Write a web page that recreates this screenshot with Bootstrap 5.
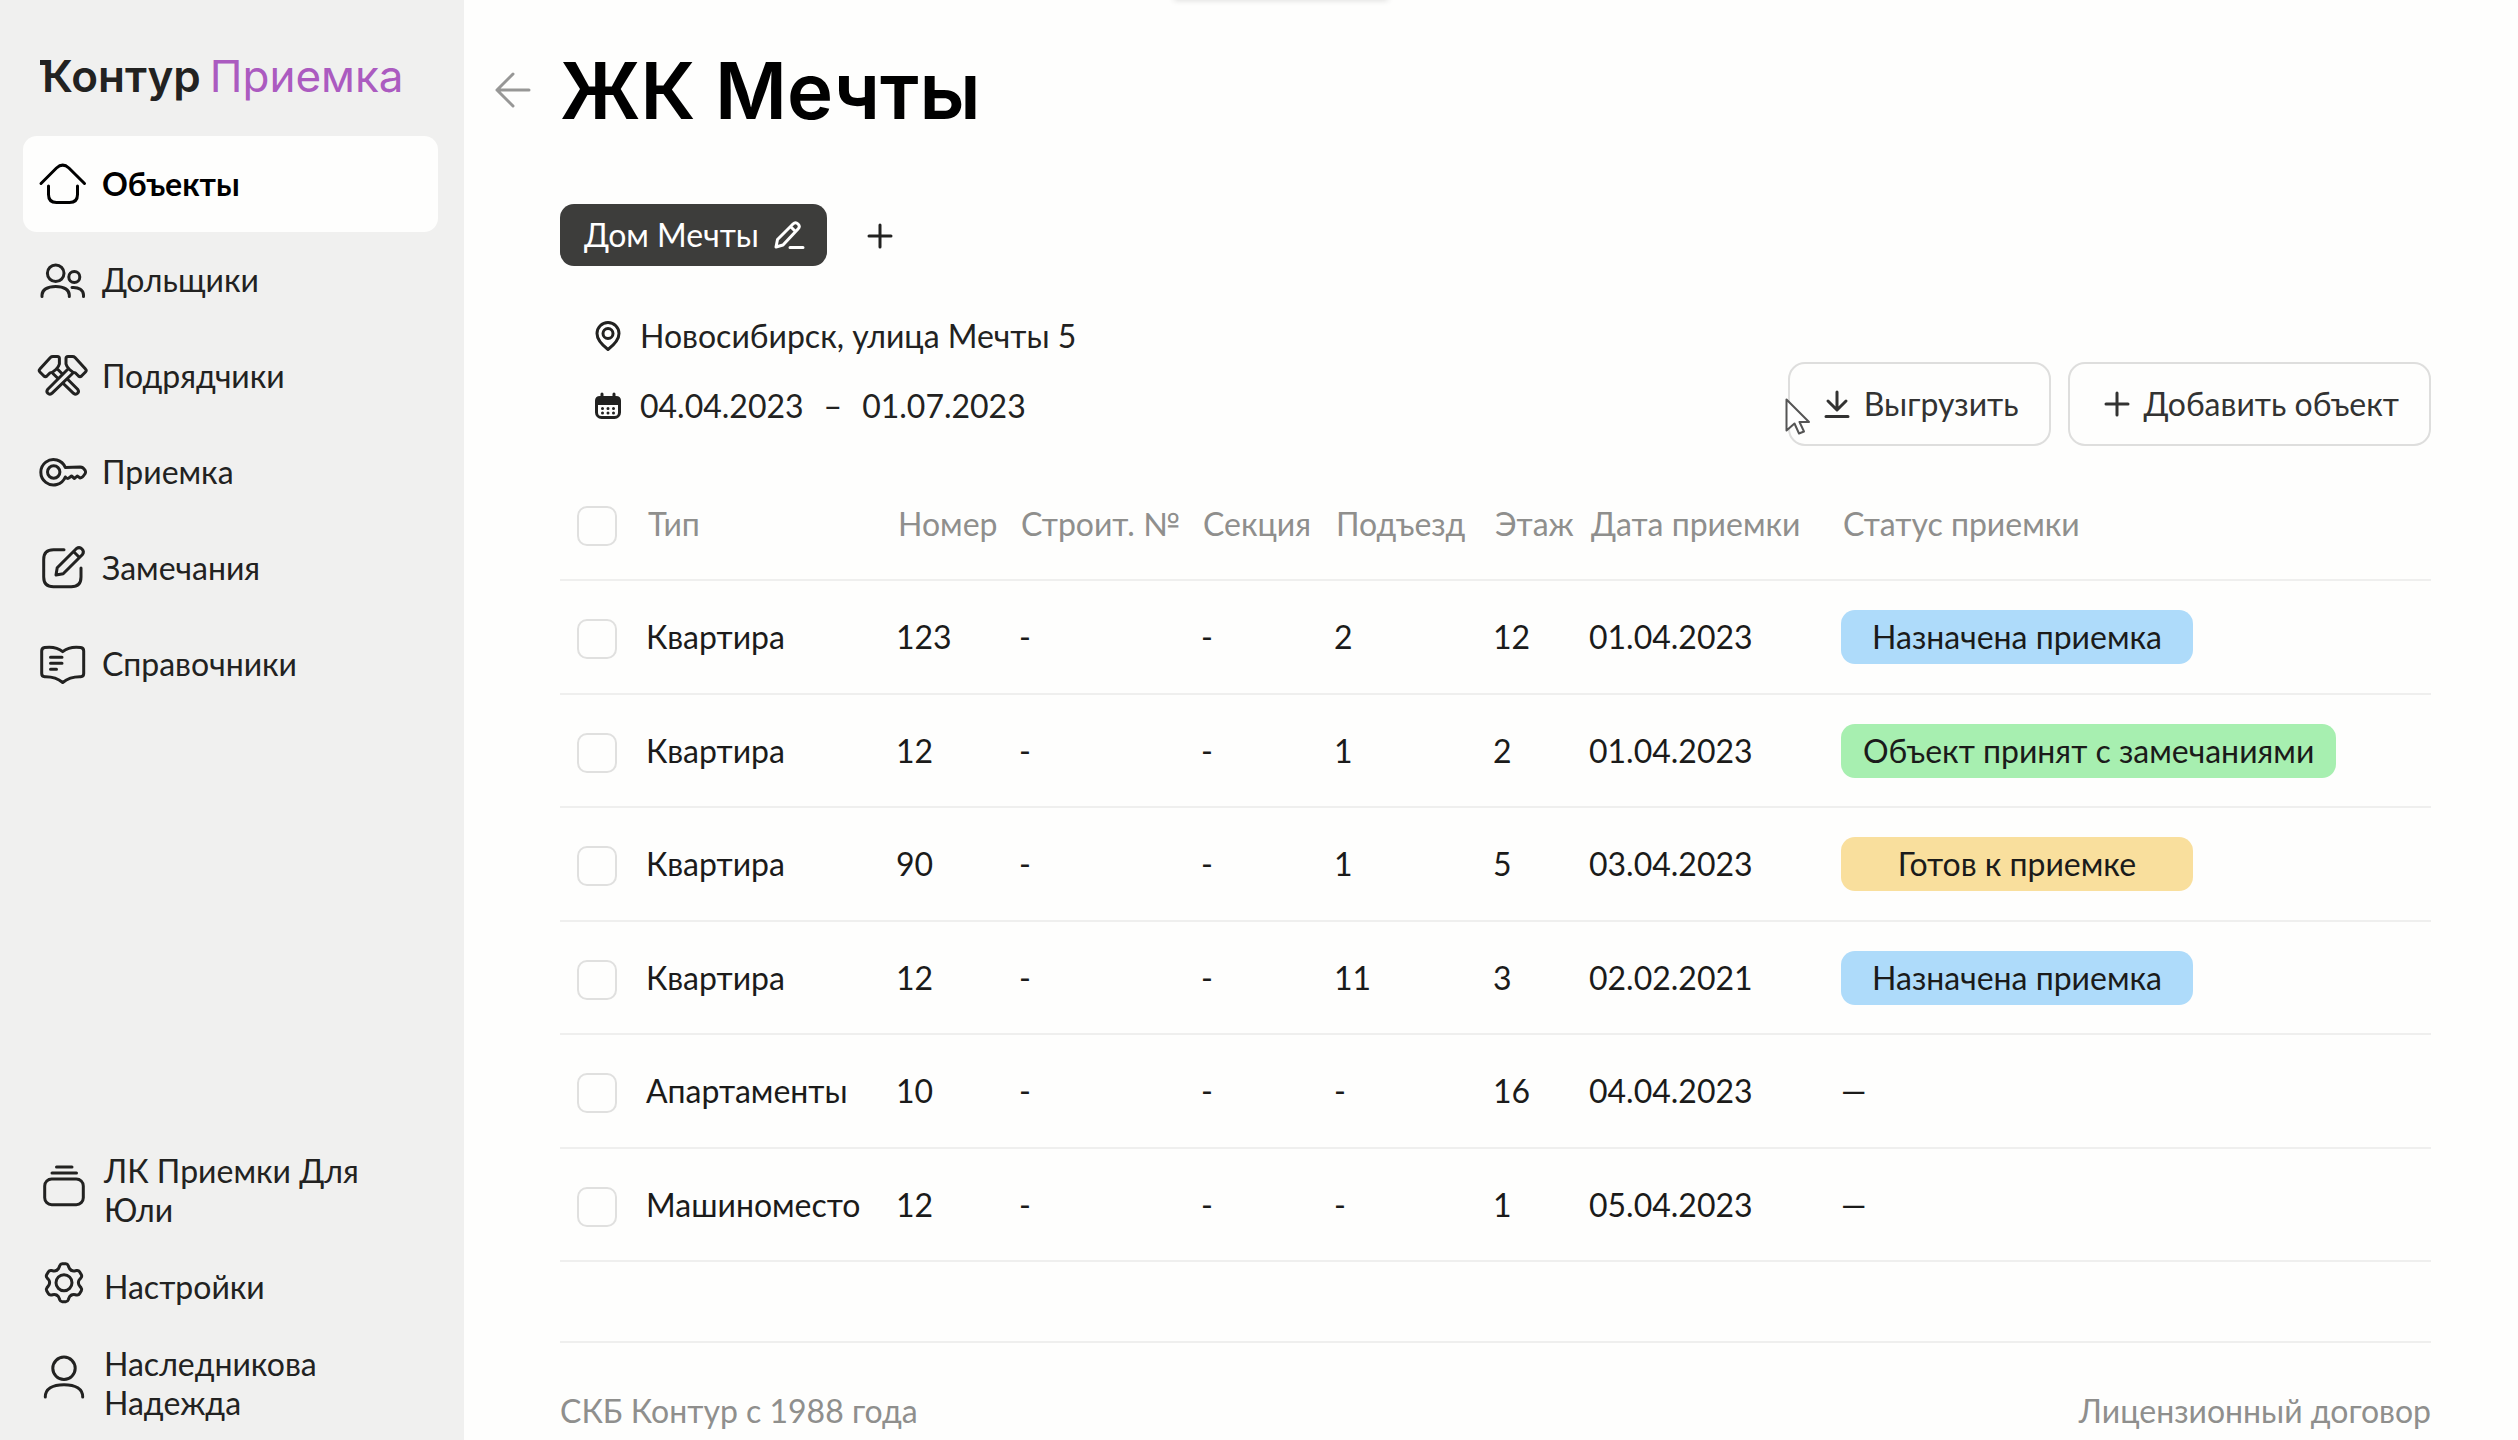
<!DOCTYPE html>
<html lang="ru">
<head>
<meta charset="utf-8">
<meta name="viewport" content="width=device-width, initial-scale=1">
<title>ЖК Мечты — Контур Приемка</title>
<link href="https://cdn.jsdelivr.net/npm/bootstrap@5.3.0/dist/css/bootstrap.min.css" rel="stylesheet">
<style>
  :root { --side: #f0f0ef; --ink: #222221; --muted: #8f8f8d; --rule: #efefee; }
  body { font-family: Lato, "Noto Sans", sans-serif; font-size: 32px; line-height: 40px; color: var(--ink); background: #fefefd; }
  a { color: inherit; text-decoration: none; }
  svg { display: block; flex: none; overflow: visible; fill: none; stroke: currentColor; stroke-width: 3px; stroke-linecap: round; stroke-linejoin: round; }

  .side { width: 464px; height: 100vh; padding: 50px 26px 18px 23px; background: var(--side); }
  .brand { font-family: Inter, sans-serif; font-size: 44px; line-height: 52px; margin: 0 0 34px 19px; gap: 9px; }
  .brand-main { position: relative; font-weight: 600; }
  .brand-main::before { content: ""; position: absolute; left: -2px; top: 10px; width: 8px; height: 5px; background: currentColor; }
  .brand-product { color: #ab5bc0; }
  .side-link { height: 96px; padding-left: 16px; gap: 15px; border-radius: 14px; }
  .side-link.active { background: #fefefd; color: #000; font-weight: 700; }
  .side-foot { gap: 38px; padding-left: 16px; line-height: 39px; }
  .side-foot a { gap: 17px; }
  .side-foot svg { margin-block: -5px; }

  .page { padding: 43px 87px 8px 31px; }
  .page-head { gap: 29px; }
  .back { color: #979796; }
  h1 { font-family: Inter, sans-serif; font-size: 78px; line-height: 96px; font-weight: 600; color: #000; }
  .page-body { padding-left: 65px; }
  .house-row { margin-top: 65px; gap: 36px; }
  .house { height: 62px; padding: 0 22px 0 24px; gap: 14px; border: 0; border-radius: 14px; background: #3d3d3b; color: #fff; }
  .plain { padding: 0 5px; border: 0; background: none; color: inherit; }
  .facts { gap: 30px; padding: 0 0 20px 34px; }
  .facts > div { gap: 18px; }
  .until { margin: 0 20px; }
  .info-row { margin-top: 50px; }
  .outline-btn { height: 84px; padding: 0 30px 0 34px; gap: 14px; border: 2px solid #dededd; border-radius: 17px; background: #fefefd; color: #333332; }
  .actions { gap: 17px; }
  .pointer { position: absolute; left: -3px; top: 36px; stroke: #555; stroke-width: 2px; fill: #fff; }

  .objects { width: 100%; table-layout: fixed; border-collapse: separate; border-spacing: 0; white-space: nowrap; color: #1b1b1a; }
  .objects th, .objects td { padding: 0; vertical-align: middle; border-bottom: 2px solid var(--rule); }
  .objects th { height: 135px; padding: 23px 0 0 2px; font-weight: 400; color: var(--muted); }
  .objects th:first-child { padding-left: 0; }
  .objects td { height: 114px; }
  .objects tr:nth-child(even) td { height: 113px; }
  .objects .form-check-input { display: block; width: 40px; height: 40px; margin: 4px 0 0 17px; border: 2px solid #e0e0df; border-radius: 10px; background-color: #fefefd; }
  .w-check { width: 86px; } .w-type { width: 250px; } .w-num { width: 123px; } .w-build { width: 182px; }
  .w-sect { width: 133px; } .w-entr { width: 159px; } .w-floor { width: 96px; } .w-date { width: 252px; }
  .state { display: inline-block; min-width: 352px; padding: 7px 22px; border-radius: 14px; text-align: center; vertical-align: middle; }
  .state-set { background: #aedbfa; }
  .state-done { background: #a7efb0; }
  .state-ready { background: #f9df9d; }
  .page-foot { margin-top: 79px; padding-top: 48px; border-top: 2px solid var(--rule); color: var(--muted); }
  .top-shade { position: absolute; top: -6px; left: 50%; width: 214px; height: 6px; margin-left: -317px; box-shadow: 0 0 6px rgba(0,0,0,.16); }
</style>
</head>
<body>
<div class="d-flex">
  <aside class="side d-flex flex-column flex-shrink-0 sticky-top">
    <a href="#" class="brand d-flex"><span class="brand-main">Контур</span><span class="brand-product">Приемка</span></a>
    <nav class="d-flex flex-column">
      <a href="#" class="side-link active d-flex align-items-center" aria-current="page">
        <svg width="48" height="48"><path d="M2 23.5 17.5 8Q23.7 2.300 29.900 8L45.500 23.500M9.500 26v8.500q0 8 8 8h13q8 0 8-8V26"/></svg>Объекты</a>
      <a href="#" class="side-link d-flex align-items-center">
        <svg width="48" height="48"><circle cx="16.700" cy="17.300" r="8.300"/><circle cx="35.300" cy="21" r="5.500"/><path d="M3 40.500V39c0-5 5-8.500 13.700-8.500S30.300 34 30.300 39v1.500M33 31.500c7-.5 11.500 2.500 11.500 7.500v1.500"/></svg>Дольщики</a>
      <a href="#" class="side-link d-flex align-items-center">
        <svg width="48" height="48"><defs><g id="hammer"><path fill="#f0f0ef" d="M28.500 17.500 8.800 37.200q-1.800 2.300 0 4.100t4.100 0L33.500 21.500"/><path fill="#f0f0ef" d="M27 6.500q0-2 2-2h4.500q1.500 0 2.500 1l10.500 11.500q1.500 1.500 0 3L42.500 24q-1.500 1.300-3 0l-3-3q-3-.5-6-3.500T27 12z"/></g></defs><use href="#hammer" transform="translate(47.400 0) scale(-1 1)"/><use href="#hammer"/></svg>Подрядчики</a>
      <a href="#" class="side-link d-flex align-items-center">
        <svg width="48" height="48"><circle cx="14.700" cy="24" r="6.200"/><path d="M26.300 19.500a12.700 12.700 0 1 0 0 9.500q2.200 2.500 4.200.5l2-1.500 3 2.500 2.700-2.500 3 2q2 0 5-4.500.8-1.500 0-3-2-3.500-5-3.500z"/></svg>Приемка</a>
      <a href="#" class="side-link d-flex align-items-center">
        <svg width="48" height="48"><path d="M25 5.700H14.500q-9.800 0-9.800 9.800v17.400q0 9.800 9.800 9.800h17.700q9.800 0 9.800-9.800V24M17 31l1.200-7.200L37.500 4.500q3-2 5.500.5t.5 5.500L24.200 29.800zM35 8l5 5"/></svg>Замечания</a>
      <a href="#" class="side-link d-flex align-items-center">
        <svg width="48" height="48"><path d="M2.700 11q0-3 3-3.500Q17 6 23.700 11.700 30.500 6 41.700 7.500q3 .5 3 3.500v22.500q0 3-3 3.300Q31 36.500 23.700 42.500 16.500 36.500 5.700 36.800q-3-.3-3-3.300zM11.500 17.300H23M11.500 23.300H23M11.500 29.300h6"/></svg>Справочники</a>
    </nav>
    <div class="side-foot d-flex flex-column mt-auto">
      <a href="#" class="d-flex align-items-center">
        <svg width="48" height="48"><path d="M17.500 1H33M13 7h24.500"/><rect x="5.700" y="13" width="38.600" height="25.700" rx="7"/></svg>ЛК Приемки Для<br>Юли</a>
      <a href="#" class="d-flex align-items-center">
        <svg width="48" height="48"><defs><path id="tooth" d="M-7.200-12.500c2.200-1 2.200-2.500 2.900-4.500q.8-2 2.500-2h3.600q1.700 0 2.500 2c.7 2 .7 3.500 2.900 4.500"/></defs><g transform="translate(25 19.700)"><circle r="8"/><use href="#tooth"/><use href="#tooth" transform="rotate(60)"/><use href="#tooth" transform="rotate(120)"/><use href="#tooth" transform="rotate(180)"/><use href="#tooth" transform="rotate(240)"/><use href="#tooth" transform="rotate(300)"/></g></svg>Настройки</a>
      <a href="#" class="d-flex align-items-center">
        <svg width="48" height="48"><circle cx="25" cy="9.300" r="11.200"/><path d="M6.300 38c0-8 7-12.300 18.700-12.300S43.700 30 43.700 38"/></svg>Наследникова<br>Надежда</a>
    </div>
  </aside>

  <main class="page flex-grow-1 position-relative">
    <div class="top-shade"></div>
    <div class="page-head d-flex align-items-center">
      <a href="#" class="back" aria-label="Назад"><svg width="36" height="36"><path d="M34 17H2M18 1 2 17l16 16"/></svg></a>
      <h1 class="m-0">ЖК Мечты</h1>
    </div>
    <div class="page-body">
      <div class="house-row d-flex align-items-center">
        <button type="button" class="house d-flex align-items-center">Дом Мечты
          <svg width="32" height="30"><path d="M3 27l1.500-7.500L20 4q2.500-2.500 5 0t0 5L10 25zM17.500 6.500l5 5M17 27.500h13"/></svg></button>
        <button type="button" class="plain" aria-label="Добавить дом"><svg width="24" height="24"><path d="M12 2v22M1 13h22"/></svg></button>
      </div>
      <div class="info-row d-flex justify-content-between align-items-end">
        <div class="facts d-flex flex-column">
          <div class="d-flex align-items-center"><svg width="28" height="30"><path d="M14 28.500Q3 20 3 12.500a11 11 0 0 1 22 0Q25 20 14 28.500z"/><circle cx="14" cy="12.500" r="5"/></svg>Новосибирск, улица Мечты 5</div>
          <div class="d-flex align-items-center"><svg width="28" height="28"><rect x="2.500" y="6" width="23" height="19.500" rx="5"/><path fill="currentColor" stroke="none" d="M1 13V9q0-5 5-5h16q5 0 5 5v4z"/><path d="M8 2v4M20 2v4"/><path stroke-dasharray="0 5.500" d="M8.500 16.500h12M8.500 21h12"/></svg><span>04.04.2023<span class="until">–</span>01.07.2023</span></div>
        </div>
        <div class="actions d-flex position-relative">
          <button type="button" class="outline-btn d-flex align-items-center"><svg width="26" height="28"><path d="M13 2v17M4 11l9 9 9-9M2 26.500h22"/></svg>Выгрузить</button>
          <button type="button" class="outline-btn d-flex align-items-center"><svg width="26" height="26"><path d="M13 2v22M2 13h22"/></svg>Добавить объект</button>
          <svg class="pointer" width="26" height="38"><path d="M1.500 1.500v31l8-7 4.500 10 5-2-4.500-9.500h9.500z"/></svg>
        </div>
      </div>

      <table class="objects">
        <thead>
          <tr>
            <th class="w-check"><input type="checkbox" class="form-check-input" aria-label="Выбрать все"></th>
            <th class="w-type">Тип</th><th class="w-num">Номер</th><th class="w-build">Строит. №</th><th class="w-sect">Секция</th><th class="w-entr">Подъезд</th><th class="w-floor">Этаж</th><th class="w-date">Дата приемки</th><th>Статус приемки</th>
          </tr>
        </thead>
        <tbody>
          <tr><td><input type="checkbox" class="form-check-input" aria-label="Выбрать квартиру 123"></td><td>Квартира</td><td>123</td><td>-</td><td>-</td><td>2</td><td>12</td><td>01.04.2023</td><td><span class="state state-set">Назначена приемка</span></td></tr>
          <tr><td><input type="checkbox" class="form-check-input" aria-label="Выбрать квартиру 12"></td><td>Квартира</td><td>12</td><td>-</td><td>-</td><td>1</td><td>2</td><td>01.04.2023</td><td><span class="state state-done">Объект принят с замечаниями</span></td></tr>
          <tr><td><input type="checkbox" class="form-check-input" aria-label="Выбрать квартиру 90"></td><td>Квартира</td><td>90</td><td>-</td><td>-</td><td>1</td><td>5</td><td>03.04.2023</td><td><span class="state state-ready">Готов к приемке</span></td></tr>
          <tr><td><input type="checkbox" class="form-check-input" aria-label="Выбрать квартиру 12, подъезд 11"></td><td>Квартира</td><td>12</td><td>-</td><td>-</td><td>11</td><td>3</td><td>02.02.2021</td><td><span class="state state-set">Назначена приемка</span></td></tr>
          <tr><td><input type="checkbox" class="form-check-input" aria-label="Выбрать апартаменты 10"></td><td>Апартаменты</td><td>10</td><td>-</td><td>-</td><td>-</td><td>16</td><td>04.04.2023</td><td>—</td></tr>
          <tr><td><input type="checkbox" class="form-check-input" aria-label="Выбрать машиноместо 12"></td><td>Машиноместо</td><td>12</td><td>-</td><td>-</td><td>-</td><td>1</td><td>05.04.2023</td><td>—</td></tr>
        </tbody>
      </table>

      <footer class="page-foot d-flex justify-content-between"><span>СКБ Контур с 1988 года</span><a href="#">Лицензионный договор</a></footer>
    </div>
  </main>
</div>
<script src="https://cdn.jsdelivr.net/npm/bootstrap@5.3.0/dist/js/bootstrap.bundle.min.js"></script>
</body>
</html>
